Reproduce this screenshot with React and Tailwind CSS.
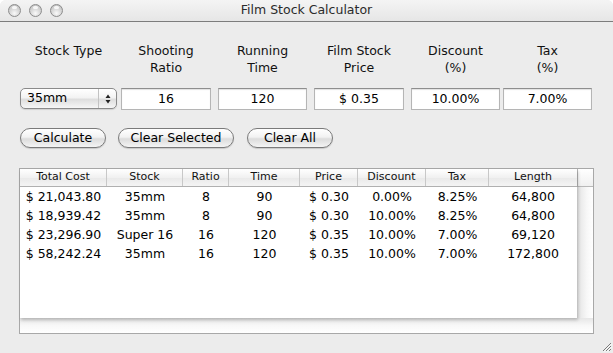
import React from "react";

const font = { fontFamily: '"DejaVu Sans", "Liberation Sans", sans-serif' };

function Light() {
  return (
    <div className="w-[13px] h-[13px] rounded-full border border-[#8c8c8c] bg-[radial-gradient(circle_at_50%_75%,#fafafa_0%,#d9d9d9_45%,#b8b8b8_100%)] relative">
      <div className="absolute left-[3px] top-[1px] w-[5px] h-[3px] rounded-full bg-white/80" />
    </div>
  );
}

function Field({ w, ml, children }) {
  return (
    <div
      className={`${w} ${ml} h-[22px] bg-white border border-[#b5b5b5] border-t-[#8e8e8e] shadow-[inset_0_1px_1px_rgba(0,0,0,0.12)] flex items-center justify-center text-[12.5px] text-black`}
    >
      {children}
    </div>
  );
}

function Label({ children }) {
  return (
    <div className="h-[34px] flex flex-col items-center justify-start text-[12.5px] leading-[17px] text-[#111] text-center">
      {children}
    </div>
  );
}

function Btn({ w, ml, children }) {
  return (
    <div
      className={`${w} ${ml} h-[20px] rounded-full border border-[#7a7a7a] bg-[linear-gradient(to_bottom,#ffffff_0%,#f2f2f2_45%,#dcdcdc_55%,#f4f4f4_100%)] flex items-center justify-center text-[12.5px] text-black shadow-[0_1px_1px_rgba(0,0,0,0.15)]`}
    >
      {children}
    </div>
  );
}

const cols = [
  { name: "Total Cost", w: "w-[87px]" },
  { name: "Stock", w: "w-[76px]" },
  { name: "Ratio", w: "w-[46px]" },
  { name: "Time", w: "w-[71px]" },
  { name: "Price", w: "w-[58px]" },
  { name: "Discount", w: "w-[68px]" },
  { name: "Tax", w: "w-[63px]" },
  { name: "Length", w: "w-[88px]" },
];

const rows = [
  ["$ 21,043.80", "35mm", "8", "90", "$ 0.30", "0.00%", "8.25%", "64,800"],
  ["$ 18,939.42", "35mm", "8", "90", "$ 0.30", "10.00%", "8.25%", "64,800"],
  ["$ 23,296.90", "Super 16", "16", "120", "$ 0.35", "10.00%", "7.00%", "69,120"],
  ["$ 58,242.24", "35mm", "16", "120", "$ 0.35", "10.00%", "7.00%", "172,800"],
];

export default function App() {
  return (
    <div className="w-[613px] h-[353px] bg-white" style={font}>
      <div className="w-[613px] h-[353px] bg-[#ececec] rounded-t-[6px] overflow-hidden flex flex-col relative">
        {/* Title bar */}
        <div className="h-[22px] shrink-0 bg-[linear-gradient(to_bottom,#f4f4f4,#e6e6e6)] border-b border-[#7d7d7d] flex items-center relative">
          <div className="flex items-center gap-[8px] pl-[8px]">
            <Light />
            <Light />
            <Light />
          </div>
          <div className="absolute inset-0 flex items-center justify-center text-[12.5px] text-[#2b2b2b]">
            Film Stock Calculator
          </div>
        </div>

        {/* Input columns */}
        <div className="flex pt-[20px]">
          <div className="flex flex-col ml-[20px] w-[97px]">
            <Label>Stock Type</Label>
            <div className="mt-[12px] h-[21px] rounded-[5px] border border-[#8a8a8a] bg-[linear-gradient(to_bottom,#ffffff_0%,#f3f3f3_45%,#dedede_55%,#f6f6f6_100%)] flex items-center shadow-[0_1px_1px_rgba(0,0,0,0.12)]">
              <span className="flex-1 pl-[6px] text-[12.5px] text-black">35mm</span>
              <div className="w-[18px] h-full border-l border-[#c2c2c2] flex flex-col items-center justify-center gap-[2px]">
                <svg width="6" height="10" viewBox="0 0 6 10">
                  <path d="M3 0.5 L5.5 4 L0.5 4 Z" fill="#222" />
                  <path d="M3 9.5 L5.5 6 L0.5 6 Z" fill="#222" />
                </svg>
              </div>
            </div>
          </div>
          <div className="flex flex-col ml-[4px] w-[90px]">
            <Label>
              <span>Shooting</span>
              <span>Ratio</span>
            </Label>
            <div className="mt-[12px]"><Field w="w-[90px]" ml="">16</Field></div>
          </div>
          <div className="flex flex-col ml-[7px] w-[89px]">
            <Label>
              <span>Running</span>
              <span>Time</span>
            </Label>
            <div className="mt-[12px]"><Field w="w-[89px]" ml="">120</Field></div>
          </div>
          <div className="flex flex-col ml-[7px] w-[90px]">
            <Label>
              <span>Film Stock</span>
              <span>Price</span>
            </Label>
            <div className="mt-[12px]"><Field w="w-[90px]" ml="">$ 0.35</Field></div>
          </div>
          <div className="flex flex-col ml-[7px] w-[89px]">
            <Label>
              <span>Discount</span>
              <span>(%)</span>
            </Label>
            <div className="mt-[12px]"><Field w="w-[89px]" ml="">10.00%</Field></div>
          </div>
          <div className="flex flex-col ml-[3px] w-[89px]">
            <Label>
              <span>Tax</span>
              <span>(%)</span>
            </Label>
            <div className="mt-[12px]"><Field w="w-[89px]" ml="">7.00%</Field></div>
          </div>
        </div>

        {/* Buttons */}
        <div className="flex mt-[18px]">
          <Btn w="w-[86px]" ml="ml-[20px]">Calculate</Btn>
          <Btn w="w-[116px]" ml="ml-[12px]">Clear Selected</Btn>
          <Btn w="w-[86px]" ml="ml-[13px]">Clear All</Btn>
        </div>

        {/* Table */}
        <div className="mt-[20px] ml-[19px] w-[575px] h-[166px] border border-[#a8a8a8] bg-white flex flex-col">
          <div className="flex h-[149px]">
            <div className="w-[557px] h-[149px] bg-white flex flex-col shadow-[1px_2px_3px_rgba(0,0,0,0.22)] relative z-10">
              <div className="flex h-[18px] border-b border-[#b0b0b0] bg-[linear-gradient(to_bottom,#ffffff,#f1f1f1_50%,#e9e9e9_51%,#f4f4f4)]">
                {cols.map((c, i) => (
                  <div
                    key={c.name}
                    className={`${c.w} h-full flex items-center justify-center text-[11px] text-[#111] ${i < cols.length - 1 ? "border-r border-[#c8c8c8]" : ""}`}
                  >
                    {c.name}
                  </div>
                ))}
              </div>
              <div className="pt-[1px]">
                {rows.map((r, ri) => (
                  <div key={ri} className="flex h-[19px]">
                    {r.map((v, ci) => (
                      <div
                        key={ci}
                        className={`${cols[ci].w} h-full flex items-center justify-center text-[12.5px] text-black`}
                      >
                        {v}
                      </div>
                    ))}
                  </div>
                ))}
              </div>
            </div>
            <div className="w-[16px] h-[149px] flex flex-col">
              <div className="h-[18px] border-b border-l border-[#b8b8b8] bg-[linear-gradient(to_bottom,#ffffff,#f0f0f0)]" />
              <div className="flex-1 bg-[linear-gradient(to_right,#e2e2e2,#f7f7f7_60%,#ffffff)]" />
            </div>
          </div>
          <div className="flex-1 bg-[linear-gradient(to_bottom,#e6e6e6,#f8f8f8_50%,#ffffff)]" />
        </div>

        {/* Resize grip */}
        <div className="absolute right-[1px] bottom-[1px]">
          <svg width="12" height="12" viewBox="0 0 12 12">
            <path d="M11 3 L3 11 M11 6 L6 11 M11 9 L9 11" stroke="#7a7a7a" strokeWidth="1" />
            <path d="M11.8 3.8 L3.8 11.8 M11.8 6.8 L6.8 11.8" stroke="#ffffff" strokeWidth="0.8" />
          </svg>
        </div>
      </div>
    </div>
  );
}
